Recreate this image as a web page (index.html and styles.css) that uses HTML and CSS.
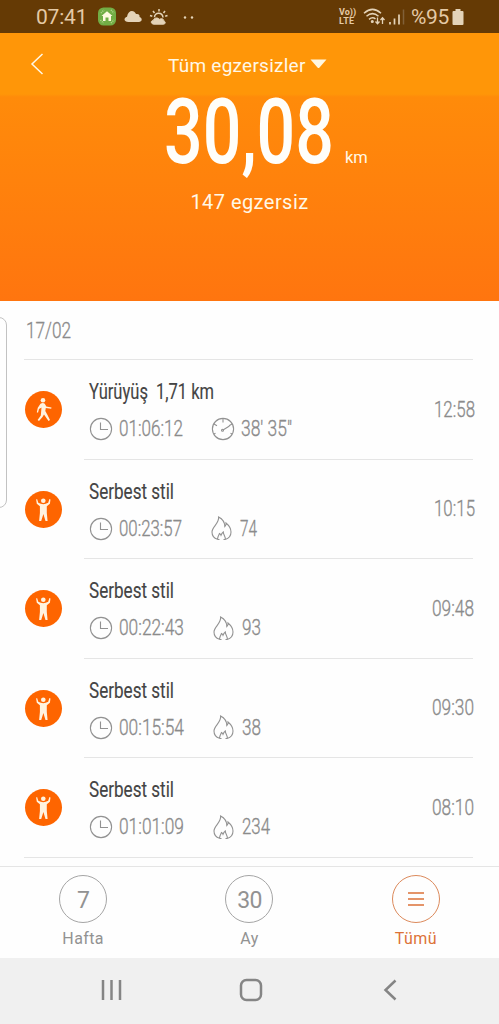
FILE: index.html
```html
<!DOCTYPE html>
<html lang="tr">
<head>
<meta charset="utf-8">
<title>Tüm egzersizler</title>
<link rel="stylesheet" href="styles.css">
</head>
<body>
<svg class="defs" width="0" height="0">
  <symbol id="clock" viewBox="0 0 24 24"><circle cx="12" cy="12" r="10.6"/><path d="M11.500 5.500V12.500H19"/></symbol>
  <symbol id="pace" viewBox="0 0 24 24"><circle cx="12" cy="12" r="10.600"/><path d="M12 1.500V5.500M3 7l3 1.700M21 7l-3 1.700M12 13l6.500-4M3 17l1.500-.8M21 17l-1.500-.8"/><circle cx="11.500" cy="13.300" r="1"/></symbol>
  <symbol id="flame" viewBox="0 0 21 25"><path d="M6.500 23.300C3 22.300 1 19.500 1 16 1 10.800 8.300 7.500 7.600 1 11.500 3 13.800 6 13.800 10.500 14.800 9.500 15.200 8.500 15 7 18 9.500 20 12.500 20 16 20 20 17.500 22.500 14.200 23.500M6.500 23.300C6.500 20.500 8 19 8.500 17.500 9.500 17.800 9.700 18.500 10 19.300 10.500 18 11 17 12.300 16 12.300 19 15 20.500 14.200 23.500M6.500 23.500H8.500M12.500 23.500H14.200"/></symbol>
  <symbol id="walk" viewBox="0 0 37 37"><circle cx="18" cy="9.300" r="2.300"/><path d="M15.500 12.700Q18 11.500 19.800 12.700L21.300 15.500 26.500 16.600 26.200 17.800 20.800 17 20.300 20 22.500 24 25 29 23.500 30 19 23.500 17.500 26 14 30 12.600 29 15.800 24.500 16.500 16.500 14 18 13 21.700 11.800 21.300 12.800 16.800Z"/></symbol>
  <symbol id="free" viewBox="0 0 37 37"><circle cx="18.300" cy="9.800" r="2.300"/><path d="M12.100 8 13.300 11.800Q18.300 14.500 23.200 11.800L24.400 8 25.500 8.600 24.900 12.800 21.800 15.200V22L22.600 30H20.500L18.400 23 16.200 30H14.100L14.900 22V15.200L11.800 12.800 11.100 8.600Z"/></symbol>
</svg>
<div class="screen">
  <header class="status">
    <span class="clock">07:41</span>
    <svg class="notifs" width="104" height="24" viewBox="0 0 104 24">
      <rect x="1" y="2.500" width="18" height="18" rx="5.500" fill="#72ad45"/><path d="M4 8 7 5M14 5l3 3M3.500 15l3 3M14 18l3-3" stroke="#b6d68e" stroke-width="1.500" stroke-dasharray="1 1"/><path d="M4.500 11 10 6.200 15.500 11H14V16H11.500V12.500H8.500V16H6V11Z" fill="#fff9df"/>
      <path d="M31.500 17C26.500 17 26.500 12.500 30 11.700 31 5 37 4.500 39 9 42 8.500 43 10.200 42.500 12 46 13 45 17 42 17Z" fill="#e4d3b8"/>
      <path d="M57 19.200C53.500 19 53.500 15.500 56.500 15.200 57 12.500 61 12.300 62.300 14.300 65 12.800 67 14.200 66.700 16 69 16.500 68.500 19.200 66.500 19.200Z" fill="#e4d3b8" stroke="#e4d3b8"/><path d="M57.500 12.200C57.500 7 65.500 7 66 12.500M62 4V6.500M56 6l1.500 2M68 6l-1.500 2M53 10.500l2.300.8M70.500 10.500l-2.300.8" fill="none" stroke="#e4d3b8" stroke-width="1.500"/>
      <circle cx="88" cy="12.500" r="1.200" fill="#e4d3b8"/><circle cx="95" cy="12.500" r="1.200" fill="#e4d3b8"/>
    </svg>
    <span class="volte"><span>Vo))</span><span>LTE</span></span>
    <svg class="signal" width="44" height="22" viewBox="0 0 44 22" fill="none" stroke="#e4d3b8" stroke-width="1.500">
      <path d="M2 7.300Q10.500-.5 19 7.300M4.500 10.300Q10.500 5 16.500 10.300M7 13.300Q10.500 10.500 13.500 13"/><circle cx="10.300" cy="15.500" r=".8" fill="#e4d3b8"/><path d="M15.500 11.500V17.500M13.500 15.500 15.500 17.700 17.500 15.500M20.500 18V12M18.500 14 20.500 11.800 22.500 14" stroke-width="1.300"/><path d="M28 18.500V16M32.500 18.500V12.500M37 18.500V8.500" stroke-width="1.700"/><path d="M41.500 18.500V3.500" stroke="#806038"/>
    </svg>
    <span class="percent">%95</span>
    <svg width="12" height="18" viewBox="0 0 12 18"><path d="M3.500 1H8.500V3H10.500Q11.500 3 11.500 4V16Q11.500 17 10.500 17H1.500Q.5 17 .5 16V4Q.5 3 1.500 3H3.500Z" fill="#e4d3b8"/></svg>
  </header>

  <section class="hero">
    <div class="bar">
      <svg class="back" width="14" height="22" viewBox="0 0 14 22"><path d="M12.500 1 2 11 12.500 21"/></svg>
      <span class="filter">Tüm egzersizler</span>
      <svg width="17" height="11" viewBox="0 0 17 11"><path d="M.5.5H16.500L9.500 8.500Q8.500 9.500 7.500 8.500Z" fill="#fff7e0"/></svg>
    </div>
    <div class="total">
      <svg class="figure" width="168" height="84" viewBox="0 0 168 84"><text class="big" x="-2" y="68" textLength="170" lengthAdjust="spacingAndGlyphs">30,08</text></svg>
      <span class="unit">km</span>
    </div>
    <div class="count">147 egzersiz</div>
  </section>

  <main class="list">
    <div class="edge"></div>
    <div class="date"><svg class="fit" width="48" height="26"><text class="meta" x="0" y="20" textLength="45" lengthAdjust="spacingAndGlyphs">17/02</text></svg></div>

    <article class="row">
      <svg class="badge"><use href="#walk"/></svg>
      <div class="body">
        <div class="info">
          <div class="title"><svg class="fit" width="60" height="28"><text class="name" y="20" textLength="59" lengthAdjust="spacingAndGlyphs">Yürüyüş</text></svg><svg class="fit" width="60" height="28"><text class="name" y="20" textLength="58" lengthAdjust="spacingAndGlyphs">1,71 km</text></svg></div>
          <div class="stats">
            <svg class="ico"><use href="#clock"/></svg><svg class="dur"><text class="meta" y="20" textLength="64" lengthAdjust="spacingAndGlyphs">01:06:12</text></svg>
            <svg class="ico"><use href="#pace"/></svg><svg class="val"><text class="meta" y="20" textLength="51" lengthAdjust="spacingAndGlyphs">38' 35"</text></svg>
          </div>
        </div>
        <svg class="time"><text class="meta" y="20" textLength="41" lengthAdjust="spacingAndGlyphs">12:58</text></svg>
      </div>
    </article>

    <article class="row">
      <svg class="badge"><use href="#free"/></svg>
      <div class="body">
        <div class="info">
          <svg width="130" height="28"><text class="name" y="20" textLength="85" lengthAdjust="spacingAndGlyphs">Serbest stil</text></svg>
          <div class="stats">
            <svg class="ico"><use href="#clock"/></svg><svg class="dur short"><text class="meta" y="20" textLength="63" lengthAdjust="spacingAndGlyphs">00:23:57</text></svg>
            <svg class="ico flame"><use href="#flame"/></svg><svg class="val"><text class="meta" y="20" textLength="17" lengthAdjust="spacingAndGlyphs">74</text></svg>
          </div>
        </div>
        <svg class="time"><text class="meta" y="20" textLength="41" lengthAdjust="spacingAndGlyphs">10:15</text></svg>
      </div>
    </article>

    <article class="row">
      <svg class="badge"><use href="#free"/></svg>
      <div class="body">
        <div class="info">
          <svg width="130" height="28"><text class="name" y="20" textLength="85" lengthAdjust="spacingAndGlyphs">Serbest stil</text></svg>
          <div class="stats">
            <svg class="ico"><use href="#clock"/></svg><svg class="dur long"><text class="meta" y="20" textLength="65" lengthAdjust="spacingAndGlyphs">00:22:43</text></svg>
            <svg class="ico flame"><use href="#flame"/></svg><svg class="val"><text class="meta" y="20" textLength="19" lengthAdjust="spacingAndGlyphs">93</text></svg>
          </div>
        </div>
        <svg class="time wide"><text class="meta" y="20" textLength="42" lengthAdjust="spacingAndGlyphs">09:48</text></svg>
      </div>
    </article>

    <article class="row">
      <svg class="badge"><use href="#free"/></svg>
      <div class="body">
        <div class="info">
          <svg width="130" height="28"><text class="name" y="20" textLength="85" lengthAdjust="spacingAndGlyphs">Serbest stil</text></svg>
          <div class="stats">
            <svg class="ico"><use href="#clock"/></svg><svg class="dur long"><text class="meta" y="20" textLength="65" lengthAdjust="spacingAndGlyphs">00:15:54</text></svg>
            <svg class="ico flame"><use href="#flame"/></svg><svg class="val"><text class="meta" y="20" textLength="19" lengthAdjust="spacingAndGlyphs">38</text></svg>
          </div>
        </div>
        <svg class="time wide"><text class="meta" y="20" textLength="42" lengthAdjust="spacingAndGlyphs">09:30</text></svg>
      </div>
    </article>

    <article class="row">
      <svg class="badge"><use href="#free"/></svg>
      <div class="body">
        <div class="info">
          <svg width="130" height="28"><text class="name" y="20" textLength="85" lengthAdjust="spacingAndGlyphs">Serbest stil</text></svg>
          <div class="stats">
            <svg class="ico"><use href="#clock"/></svg><svg class="dur long"><text class="meta" y="20" textLength="65" lengthAdjust="spacingAndGlyphs">01:01:09</text></svg>
            <svg class="ico flame"><use href="#flame"/></svg><svg class="val"><text class="meta" y="20" textLength="28" lengthAdjust="spacingAndGlyphs">234</text></svg>
          </div>
        </div>
        <svg class="time wide"><text class="meta" y="20" textLength="42" lengthAdjust="spacingAndGlyphs">08:10</text></svg>
      </div>
    </article>
  </main>

  <nav class="tabs">
    <div class="tab"><span class="ring">7</span><span>Hafta</span></div>
    <div class="tab"><span class="ring">30</span><span>Ay</span></div>
    <div class="tab active"><span class="ring"><svg width="16" height="14" viewBox="0 0 16 14"><path d="M0 1H16M0 7H16M0 13H16" stroke="#dc7238" stroke-width="1.300"/></svg></span><span>Tümü</span></div>
  </nav>

  <footer class="sysnav">
    <svg width="22" height="22" viewBox="0 0 22 22"><path d="M2 1V21M10.500 1V21M19 1V21"/></svg>
    <svg class="home" width="24" height="24" viewBox="0 0 24 24"><rect x="2" y="2" width="20" height="20" rx="5.500"/></svg>
    <svg width="14" height="22" viewBox="0 0 14 22"><path d="M12.500 1.500 2.500 11 12.500 20.500"/></svg>
  </footer>
</div>
</body>
</html>
```

FILE: styles.css
```css
* { box-sizing: border-box; }
body { margin: 0; font-family: Roboto, "Liberation Sans", sans-serif; }
svg { display: block; flex: none; }
.defs { position: absolute; }
.screen { width: 499px; height: 1024px; display: flex; flex-direction: column; background: #fefefe; overflow: hidden; }

.status { flex: none; height: 33px; background: #653a05; color: #e4c9a5; display: flex; align-items: center; padding: 0 35px 0 36px; }
.clock { width: 61px; font-size: 21px; line-height: 33px; padding-top: 2px; letter-spacing: -.2px; }
.volte { margin-left: auto; margin-right: 7px; width: 18px; font-size: 9px; line-height: 8.500px; font-weight: 700; display: flex; flex-direction: column; white-space: nowrap; }
.volte span:last-child { letter-spacing: .3px; }
.signal { margin-left: -2px; }
.percent { width: 40px; margin-left: 5px; font-size: 21px; line-height: 33px; padding-top: 2px; letter-spacing: -.3px; }
.status > svg:last-child { margin-left: 1px; }

.hero { flex: none; height: 268px; color: #fff8e7; background: linear-gradient(#ff9608 0, #ff9608 61px, #ff8b0a 64px, #ff750f 100%); }
.bar { height: 62px; display: flex; align-items: center; padding: 0 0 0 30px; }
.back { fill: none; stroke: #fff8e7; stroke-width: 1.500; }
.filter { margin-left: 124px; width: 138px; margin-right: 4px; font-size: 19px; line-height: 24px; white-space: nowrap; letter-spacing: .25px; padding-top: 4px; }
.total { height: 84px; padding-left: 166px; display: flex; align-items: flex-end; }
.figure, .fit { overflow: visible; }
.big { font-size: 91px; font-weight: 500; fill: #fffefa; }
.unit { margin-left: 11px; font-size: 16.500px; line-height: 20px; margin-bottom: 11px; }
.count { text-align: center; font-size: 20px; line-height: 24px; margin-top: 11px; letter-spacing: .45px; }

.list { flex: none; height: 556px; position: relative; padding: 0 26px 0 24px; }
.edge { position: absolute; left: -10px; top: 16px; width: 17px; height: 191px; border: 1px solid #c2c2c2; border-radius: 8px; }
.date { height: 59px; padding: 17px 0 0 2px; border-bottom: 1px solid #e5e5e5; }
.meta { font-size: 22.500px; font-weight: 300; fill: #8b8b8b; stroke: #8b8b8b; stroke-width: .35; }
.name { font-size: 22.500px; font-weight: 400; fill: #444; stroke: #444; stroke-width: .15; }
.title { display: flex; gap: 7px; width: 130px; }
.row { height: 99.500px; display: flex; align-items: center; padding-left: 1px; }
.badge { width: 37px; height: 37px; border-radius: 50%; background: #fe6500; fill: #fff3df; }
.body { flex: 1; height: 100%; margin-left: 22px; padding-left: 5px; display: flex; justify-content: space-between; align-items: center; border-bottom: 1px solid #e5e5e5; }
.row:last-child { border-bottom: 1px solid #e5e5e5; }
.row:last-child .body { border-bottom: 0; }
.info { height: 100%; padding-top: 19px; }
.stats { display: flex; margin-top: 9px; height: 26px; align-items: center; }
.ico { width: 24px; height: 24px; fill: none; stroke: #929292; stroke-width: 1.100; }
.flame { width: 21px; height: 25px; }
.dur { width: 92px; height: 26px; margin-left: 6px; overflow: visible; }
.dur.long { width: 94px; }
.val { width: 60px; height: 26px; margin-left: 6px; overflow: visible; }
.flame + .val { margin-left: 8px; }
.time { width: 39.500px; height: 26px; margin-top: 1px; overflow: visible; }
.time.wide { width: 41px; }

.tabs { flex: none; height: 101px; display: flex; padding-top: 9px; background: linear-gradient(#fefefe 9px, #e5e5e5 9px, #e5e5e5 10px, #fefefe 10px); }
.tab { flex: 1; display: flex; flex-direction: column; align-items: center; padding-top: 9px; font-size: 16px; line-height: 20px; color: #929292; letter-spacing: .4px; }
.ring { width: 48px; height: 48px; border: 1px solid #a5a5a5; border-radius: 50%; margin-bottom: 6px; display: flex; align-items: center; justify-content: center; font-size: 23px; padding-top: 4px; letter-spacing: -.7px; }
.active { color: #dc7238; }
.active .ring { border-color: #dc8a5c; padding-top: 0; }

.sysnav { flex: 1; background: #f0f0f0; display: flex; align-items: center; justify-content: space-between; padding: 0 102px 3px 101px; fill: none; stroke: #858585; stroke-width: 2.500; }
.home { margin-right: 5px; }
```
